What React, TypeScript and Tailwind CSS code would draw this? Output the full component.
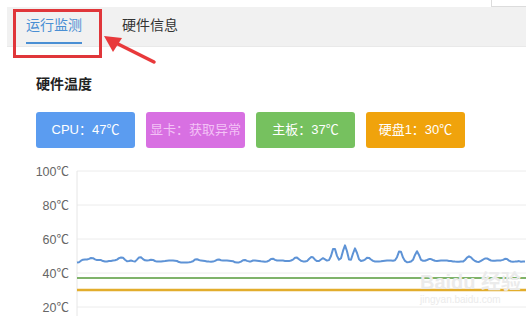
import React from "react";

const FONT = '"Liberation Sans", "Noto Sans CJK SC", sans-serif';

const badges = [
  { label: "CPU：47℃", bg: "bg-[#5b9cf0]", text: "text-white" },
  { label: "显卡：获取异常", bg: "bg-[#d870e2]", text: "text-[#f3c2f6]" },
  { label: "主板：37℃", bg: "bg-[#76c15f]", text: "text-white" },
  { label: "硬盘1：30℃", bg: "bg-[#f0a30c]", text: "text-white" },
];

// chart geometry (svg coords, svg top = page y 155)
const TOP = 17;
const STEP = 34;
const X0 = 77;
const toY = (t: number) => TOP + ((100 - t) / 20) * STEP;

const peaks: [number, number, number][] = [
  [84, 0.8, 3],
  [92, 1.6, 4],
  [100, 1.0, 3],
  [122, 2.6, 4],
  [131, 1.2, 3],
  [140, 2.2, 3],
  [152, 1.0, 3],
  [196, 0.8, 3],
  [218, 1.0, 3],
  [244, 1.4, 3],
  [272, 1.6, 3],
  [296, 3, 4],
  [312, 2.4, 3],
  [323, 2, 3],
  [334, 7.5, 3],
  [345, 9.5, 3],
  [355, 8, 3],
  [368, 2, 4],
  [400, 6.5, 3],
  [417, 6, 3],
  [430, 1.6, 4],
  [469, 3, 4],
  [486, 2, 4],
  [506, 1.5, 3],
];

const buildLine = () => {
  const pts: string[] = [];
  for (let x = X0; x <= 526; x += 2) {
    let t = 47 + Math.sin(x * 0.23) * 0.35 - (Math.sin(x * 0.11) > 0.6 ? 0.5 : 0);
    for (const [px, h, w] of peaks) {
      const d = (x - px) / w;
      t += h * Math.exp(-d * d);
    }
    pts.push(`${x},${toY(t).toFixed(1)}`);
  }
  return pts.join(" ");
};

const Chart = () => {
  const labels = [100, 80, 60, 40, 20];
  return (
    <svg width="526" height="162" className="block">
      {labels.map((v, i) => (
        <g key={v}>
          <line
            x1={X0}
            x2={526}
            y1={TOP + i * STEP}
            y2={TOP + i * STEP}
            stroke="#ececec"
            strokeWidth="1"
          />
          <text
            x="69"
            y={TOP + i * STEP + 4.5}
            textAnchor="end"
            fontSize="12.5"
            fill="#666"
            fontFamily={FONT}
          >
            {v}℃
          </text>
        </g>
      ))}
      <line x1={X0} x2={X0} y1={TOP} y2={162} stroke="#e6e6e6" />
      <line
        x1={X0}
        x2={526}
        y1={toY(37)}
        y2={toY(37)}
        stroke="#7fb36a"
        strokeWidth="2"
      />
      <line
        x1={X0}
        x2={526}
        y1={toY(30)}
        y2={toY(30)}
        stroke="#e2ad2c"
        strokeWidth="2.5"
      />
      <polyline
        points={buildLine()}
        fill="none"
        stroke="#5e93d6"
        strokeWidth="2"
        strokeLinejoin="round"
      />
    </svg>
  );
};

const Annotation = () => {
  return (
    <>
      <div className="absolute left-[13px] top-[9px] w-[89px] h-[49px] border-[3px] border-[#e0363a]" />
      <svg className="absolute left-0 top-0" width="180" height="70">
        <line
          x1="112"
          y1="41"
          x2="154"
          y2="62"
          stroke="#e8393b"
          strokeWidth="3.5"
          strokeLinecap="round"
        />
        <polygon points="104,36 122,38 113,52" fill="#e8393b" />
      </svg>
    </>
  );
};

export default function App() {
  return (
    <div
      className="relative w-[526px] h-[317px] overflow-hidden bg-white"
      style={{ fontFamily: FONT }}
    >
      <div className="h-[7px] flex justify-end">
        <div className="w-[35px] h-[7px] border-l border-b border-[#dcdcdc]" />
      </div>
      <div className="h-[40px] bg-[#f1f1f1] border-b border-[#e9e9e9] flex items-stretch pl-[19px] gap-[40px] ml-[7px]">
        <div className="relative flex items-center text-[14px] text-[#4a8fd4] pb-[2px]">
          运行监测
          <div className="absolute left-0 right-0 bottom-[2px] h-[2px] bg-[#4a8fd4]" />
        </div>
        <div className="flex items-center text-[14px] text-[#333] pb-[2px]">
          硬件信息
        </div>
      </div>
      <div className="pl-[36px] pt-[27px]">
        <div className="text-[14px] font-bold text-[#222] leading-[20px]">
          硬件温度
        </div>
        <div className="flex gap-[11px] mt-[18px]">
          {badges.map((b) => (
            <div
              key={b.label}
              className={`w-[99px] h-[36px] rounded-[3px] flex items-center justify-center text-[13px] ${b.bg} ${b.text}`}
            >
              {b.label}
            </div>
          ))}
        </div>
      </div>
      <div className="mt-[6px]">
        <Chart />
      </div>
      <div className="absolute left-[420px] top-[272px] text-[#ebebeb] leading-none whitespace-nowrap pointer-events-none">
        <div className="text-[20px] font-bold">Baidu 经验</div>
        <div className="text-[10px] mt-[3px]">jingyan.baidu.com</div>
      </div>
      <Annotation />
    </div>
  );
}
